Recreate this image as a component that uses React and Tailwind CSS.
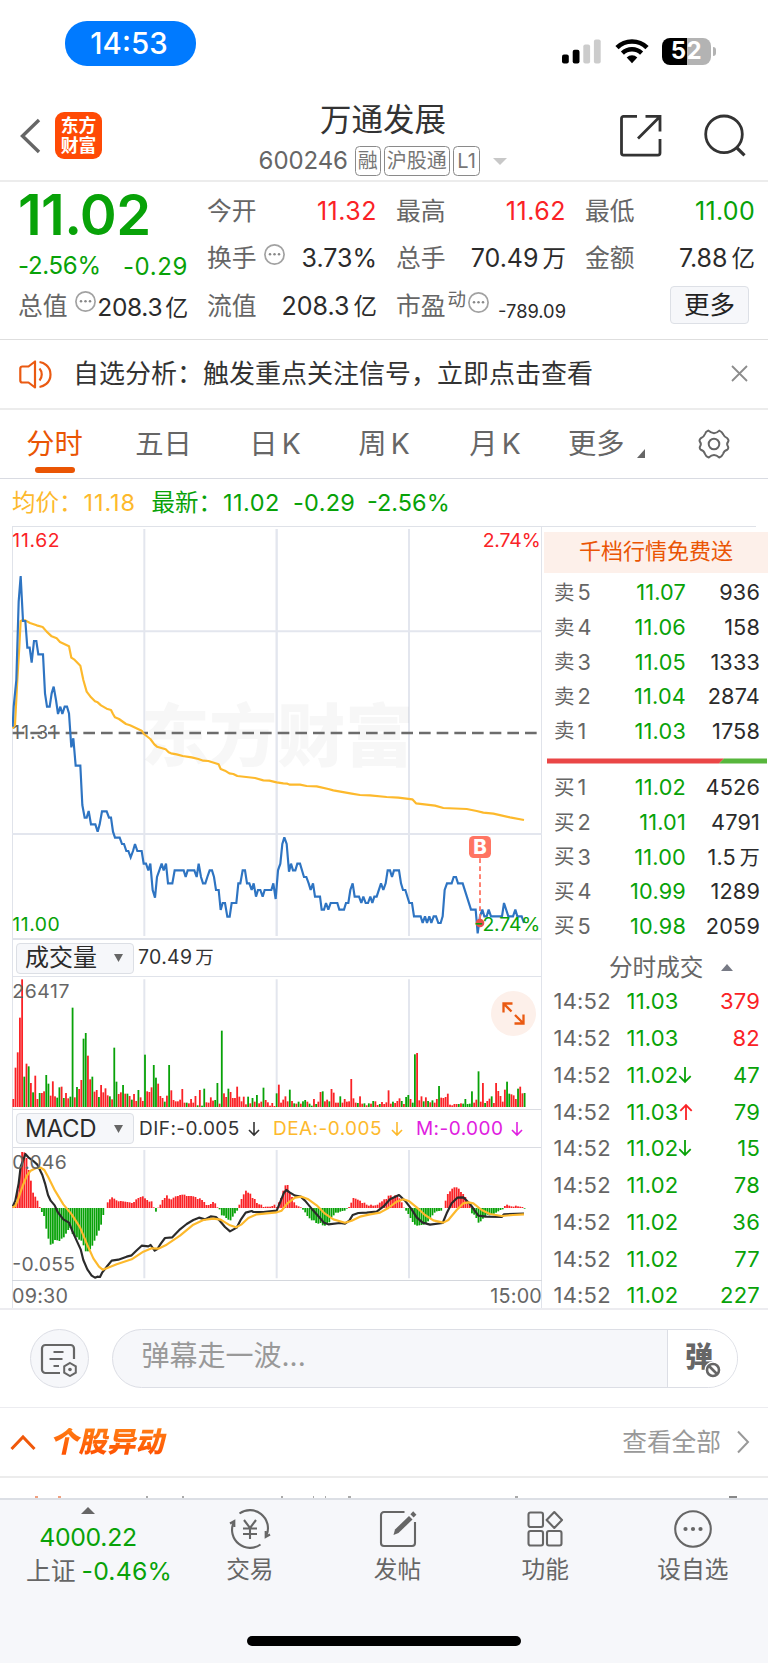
import React from "react";

const GREEN = "#08a208";
const RED = "#fa2226";

/* ---------- market data ---------- */

const PRICE_LINE =
  "38,620 41,560 49,480 56,245 62,168 69,303 76,303 82,383 89,383 95,428 102,363 109,363 115,403 129,403 135,520 141,560 149,560 155,520 161,500 168,540 174,582 181,560 187,582 194,560 201,560 207,580 214,682 220,655 227,737 241,737 247,855 254,893 260,893 266,873 273,913 286,913 293,935 299,913 306,874 320,874 327,893 333,893 339,935 345,953 359,953 366,972 372,972 379,993 385,993 392,1012 399,993 405,972 412,993 425,993 431,1031 438,1031 445,1051 451,1031 458,1110 465,1133 471,1071 478,1051 485,1031 491,1051 498,1031 504,1090 517,1090 524,1051 551,1051 557,1071 563,1051 583,1051 590,1071 596,1031 603,1071 609,1090 616,1090 622,1071 629,1051 636,1051 642,1071 648,1110 656,1110 662,1170 668,1149 675,1149 682,1190 689,1190 695,1149 709,1149 715,1090 721,1090 728,1051 735,1051 741,1090 748,1090 755,1110 761,1090 768,1130 774,1110 781,1110 788,1130 794,1110 814,1110 820,1090 827,1137 834,1051 841,1031 847,972 853,952 860,972 867,1055 873,1031 879,1051 886,1051 892,1031 900,1031 912,1071 919,1071 926,1090 932,1110 939,1090 945,1130 960,1130 965,1169 972,1169 978,1149 985,1169 992,1149 1012,1149 1018,1169 1032,1169 1038,1149 1045,1149 1051,1110 1058,1090 1064,1130 1077,1130 1084,1149 1090,1130 1097,1149 1104,1149 1111,1130 1117,1149 1123,1130 1130,1130 1143,1090 1150,1110 1157,1090 1163,1051 1170,1051 1176,1071 1182,1051 1197,1051 1203,1090 1209,1110 1216,1110 1228,1149 1236,1149 1242,1189 1262,1189 1268,1209 1275,1189 1281,1209 1288,1189 1294,1209 1301,1189 1308,1189 1315,1209 1322,1209 1328,1189 1334,1110 1341,1090 1355,1090 1361,1071 1368,1071 1374,1090 1388,1090 1413,1169 1427,1169 1433,1240 1440,1189 1447,1169 1453,1189 1460,1189 1466,1169 1473,1189 1506,1189 1512,1149 1525,1189 1539,1189 1546,1169 1552,1189 1565,1189 1572,1209";

const AVERAGE_LINE =
  "38,625 45,615 52,480 58,380 62,303 69,300 76,301 90,309 110,316 128,321 140,335 155,349 170,355 180,366 207,379 214,413 222,418 241,437 250,480 260,515 273,532 285,544 293,547 303,556 320,566 333,570 339,582 345,592 357,597 378,612 390,616 425,632 432,642 451,657 463,673 471,680 497,688 506,697 513,700 530,703 548,708 575,712 595,717 610,722 625,723 656,733 662,747 675,752 688,760 700,762 712,768 765,774 790,781 808,782 830,787 850,790 862,791 870,794 900,794 920,798 950,799 985,807 1000,811 1055,821 1080,825 1110,826 1160,831 1195,833 1237,838 1248,850 1305,857 1330,864 1400,867 1430,873 1450,878 1480,881 1530,892 1572,900";

const DIF_LINE =
  "38,830 46,812 56,760 62,710 70,690 76,672 85,682 100,693 112,704 118,716 127,735 135,760 144,795 152,812 164,826 173,846 190,868 207,878 217,903 230,932 242,958 250,990 262,1018 275,1037 285,1043 292,1040 300,1041 307,1027 322,1008 335,992 355,989 380,980 395,976 408,963 425,947 445,949 452,945 464,962 472,957 483,940 495,924 517,922 540,898 560,882 580,870 597,863 615,868 632,859 648,861 660,873 675,891 690,904 710,893 723,868 737,848 755,843 760,846 790,846 830,842 840,818 852,788 859,780 870,788 885,797 902,800 915,812 935,836 958,862 972,878 985,883 1020,879 1035,881 1048,872 1058,855 1075,849 1100,848 1130,845 1150,830 1170,808 1197,795 1215,812 1235,838 1250,862 1268,878 1290,884 1328,879 1340,850 1355,820 1372,803 1390,802 1410,822 1435,857 1460,860 1505,861 1512,853 1572,851";

const DEA_LINE =
  "38,832 46,828 55,806 68,768 80,738 92,722 108,714 122,713 133,720 145,742 165,782 190,823 215,853 240,892 262,945 280,985 297,1010 308,1019 322,1014 350,1003 395,988 430,965 455,955 475,956 500,944 540,917 580,884 610,870 640,866 662,869 690,886 708,892 725,883 745,864 770,853 830,847 845,842 862,820 885,803 905,800 925,808 950,826 975,851 1000,868 1035,878 1055,872 1080,860 1110,853 1140,848 1165,834 1190,815 1210,808 1228,814 1250,832 1275,855 1300,871 1330,878 1345,870 1370,840 1390,820 1405,817 1420,820 1445,840 1470,852 1505,858 1540,855 1572,853";

// One bar per minute; a negative number is a falling (green) minute.
const VOLUMES = [
  24, 118, 164, 268, 383, -91, 130, -122, 72, -44, 94, 24, -42, 42, 47, -96, -70, 34, 77, 32,
  -28, -59, 61, -27, 42, 26, -31, -298, 29, -60, 54, 81, -205, -222, 154, 83, -91, 46, 51, -30,
  66, 44, 56, 35, -32, 23, -178, -76, 39, 44, -66, 40, -40, 33, -22, 39, 18, -51, 29, 18,
  -157, 47, 45, 59, -126, -88, 70, 33, 27, -16, 34, -126, 50, 21, 17, 17, 22, 54, 13, -13,
  11, 24, 13, 33, -5, 51, -4, -55, 14, 13, 29, 19, -21, -72, 10, -229, 41, 30, -55, 45,
  27, 27, 61, 31, 17, 31, 8, -31, 11, -27, 16, -36, 11, 16, -58, 21, 14, 4, 12, 3,
  -41, 67, 13, 22, 32, 17, -52, 18, -11, 10, -16, 10, -17, -21, 16, -10, -4, 24, -9, 16,
  45, -47, 17, 22, -17, 54, 43, 13, 13, -32, 13, 24, 16, 17, 84, 26, 13, -12, 32, 10,
  -11, 5, -11, 10, -18, 17, 6, -9, 15, 9, 14, 50, 10, -16, 12, 18, 26, -18, 9, -30,
  -36, 24, -13, -158, 162, 20, 32, -17, 29, -18, 14, -20, 13, 24, -63, 28, 27, 30, 40, 7,
  5, 9, 9, -9, 11, -10, -24, -9, -10, -47, 13, 22, -107, 16, 72, -12, 18, 25, -32, 12,
  72, 48, 33, 16, 52, -76, -40, 38, 35, 24, -55, 61, 41, -42,
];

const MACD_BARS = [
  3, 15, 55, 110, 168, 167, 150, 114, 82, 46, 34, 22, 3, -12, -24, -62, -92, -110, -107, -96,
  -97, -99, -92, -88, -77, -66, -60, -78, -85, -88, -95, -98, -112, -130, -130, -124, -113, -98, -83, -68,
  -50, -21, 0, 17, 26, 32, 28, 23, 20, 21, 20, 19, 18, 17, 15, 18, 26, 30, 33, 35,
  29, 24, 19, 20, 2, -11, 1, 10, 24, 30, 38, 28, 26, 31, 35, 36, 39, 40, 40, 36,
  36, 36, 35, 33, 27, 29, 24, 18, 9, 9, 12, 18, 14, 2, -4, -22, -23, -30, -35, -37,
  -26, -16, -8, 10, 27, 41, 52, 46, 43, 30, 27, 15, 11, 10, 3, 4, 4, 4, 6, 10,
  3, 17, 30, 52, 68, 69, 45, 33, 17, 8, 5, 2, -5, -13, -24, -31, -37, -37, -45, -47,
  -45, -52, -53, -47, -43, -28, -22, -14, -14, -11, -9, -8, -2, 3, 16, 30, 28, 25, 22, 15,
  16, 10, 7, 10, 7, 8, 10, 16, 20, 26, 27, 37, 38, 33, 38, 36, 29, 17, 1, -8,
  -18, -30, -42, -50, -53, -52, -51, -50, -47, -40, -32, -22, -14, -10, -9, -8, 0, 22, 42, 50,
  58, 62, 62, 58, 48, 42, 33, 20, 10, -16, -20, -30, -44, -40, -32, -28, -20, -22, -20, -17,
  -14, -10, -6, -4, 6, 10, 7, 5, 4, 7, 5, 4, 3, -2,
];

const SELLS = [
  ["卖", "5", "11.07", "936"],
  ["卖", "4", "11.06", "158"],
  ["卖", "3", "11.05", "1333"],
  ["卖", "2", "11.04", "2874"],
  ["卖", "1", "11.03", "1758"],
];
const BUYS = [
  ["买", "1", "11.02", "4526"],
  ["买", "2", "11.01", "4791"],
  ["买", "3", "11.00", "1.5", "万"],
  ["买", "4", "10.99", "1289"],
  ["买", "5", "10.98", "2059"],
];
const TRADES = [
  ["11.03", "", "379", true],
  ["11.03", "", "82", true],
  ["11.02", "down", "47"],
  ["11.03", "up", "79"],
  ["11.02", "down", "15"],
  ["11.02", "", "78"],
  ["11.02", "", "36"],
  ["11.02", "", "77"],
  ["11.02", "", "227"],
];

/* ---------- small pieces ---------- */

function Triangle({ w, h, down, className }) {
  const pts = down ? `0,0 ${w},0 ${w / 2},${h}` : `0,${h} ${w},${h} ${w / 2},0`;
  return (
    <svg width={w} height={h} className={className} fill="currentColor">
      <polygon points={pts} />
    </svg>
  );
}

function Info({ className = "" }) {
  return (
    <svg width="21" height="21" viewBox="0 0 21 21" className={`shrink-0 self-start text-[#a2a2a2] ${className}`}>
      <circle cx="10.5" cy="10.5" r="9.6" fill="none" stroke="currentColor" strokeWidth="1.7" />
      <g fill="#888">
        <circle cx="6" cy="10.3" r="1.25" />
        <circle cx="10.5" cy="10.3" r="1.25" />
        <circle cx="15" cy="10.3" r="1.25" />
      </g>
    </svg>
  );
}

function Arrow({ up, className = "" }) {
  return (
    <svg width="14" height="18" viewBox="0 0 14 18" fill="none" stroke="currentColor" strokeWidth="1.8" className={`shrink-0 ${className}`}>
      {up ? <path d="M7 17V2M1.3 7.8 7 2l5.7 5.8" /> : <path d="M7 1v15M1.3 10.2 7 16l5.7-5.8" />}
    </svg>
  );
}

function Cell({ label, value, unit, color = "text-[#2b2b2b]", info }) {
  return (
    <div className="flex h-[47.5px] items-center whitespace-nowrap text-[24.8px]">
      <span className="text-[#666]">{label}</span>
      {info && <Info className="ml-[7px] mt-[9px]" />}
      <span className={`ml-auto text-[25px] ${color}`}>
        {value}
        {unit && <span className="ml-[4px] text-[23.5px]">{unit}</span>}
      </span>
    </div>
  );
}

function Dropdown({ children }) {
  return (
    <div className="ml-[3px] flex h-[31px] w-[118px] shrink-0 items-center justify-between rounded-[4px] border border-[#dcdfe5] bg-[#f6f7fa] pl-[8px] pr-[10px] text-[24px] text-[#2b2b2b]">
      <span>{children}</span>
      <Triangle w={9} h={8} down className="text-[#666]" />
    </div>
  );
}

/* ---------- sections ---------- */

function StatusBar() {
  return (
    <div className="flex h-[95px] items-start justify-between pl-[65px] pr-[52px]">
      <div className="mt-[21px] flex h-[45px] w-[131px] items-center justify-center rounded-[22px] bg-[#007aff] pr-[3px] text-[29.5px] font-medium text-white">
        14:53
      </div>
      <div className="mt-[37px] flex h-7 items-center">
        <svg width="39" height="25" viewBox="0 0 39 25">
          <rect x="0" y="15.5" width="6.8" height="9" rx="2" fill="#000" />
          <rect x="10.7" y="10.8" width="6.8" height="13.7" rx="2" fill="#000" />
          <rect x="21.3" y="5.5" width="6.8" height="19" rx="2" fill="#ccc" />
          <rect x="31.9" y="0.5" width="6.8" height="24" rx="2" fill="#ccc" />
        </svg>
        <svg width="34" height="25" viewBox="0 0 34 25" fill="none" className="ml-[14px]">
          <path d="M2 8.6a21.4 21.4 0 0 1 30 0" stroke="#000" strokeWidth="4.6" />
          <path d="M7.4 14.2a13.8 13.8 0 0 1 19.2 0" stroke="#000" strokeWidth="4.4" />
          <path d="M11.7 18.4a7.6 7.6 0 0 1 10.6 0L17 24.2z" fill="#000" />
        </svg>
        <div className="ml-[13px] flex h-[27px] w-[49px] items-center justify-center rounded-[8px] bg-[linear-gradient(90deg,#000_52%,#b3b3b3_52%)] text-[24px] font-bold tracking-[0.4px] text-white">
          52
        </div>
        <div className="ml-[2px] h-[9px] w-[3px] rounded-r-full bg-[#b3b3b3]" />
      </div>
    </div>
  );
}

function Tag({ children, className = "px-[2px]" }) {
  return (
    <span className={`flex h-[30px] items-center justify-center rounded-[4.5px] border-[1.5px] border-[#8a8a8a] text-[20px] text-[#777] ${className}`}>
      {children}
    </span>
  );
}

function Header() {
  return (
    <header className="flex h-[87px] items-start border-b-2 border-[#ececec]">
      <svg width="22" height="36" viewBox="0 0 22 36" fill="none" className="ml-[19px] mt-[23px]">
        <path d="M20 2 3.500 18 20 34" stroke="#666" strokeWidth="3.4" />
      </svg>
      <div className="ml-[14px] mt-[17px] flex h-[47px] w-[47px] flex-col items-center justify-center gap-[2px] rounded-[9px] bg-[#ff4a05] text-[17.800px] font-bold text-white">
        <span>东方</span>
        <span>财富</span>
      </div>
      <div className="ml-[151px] mt-[8px] flex w-[260px] flex-col items-center">
        <h1 className="text-[31.5px] leading-[34px] text-[#333]">万通发展</h1>
        <div className="mt-[9px] flex items-center gap-[3px] text-[24px] text-[#666]">
          <span className="mr-[4px] tracking-[-0.1px]">600246</span>
          <Tag>融</Tag>
          <Tag>沪股通</Tag>
          <Tag className="px-[3.500px]">L1</Tag>
          <Triangle w={14} h={7} down className="ml-[10px] text-[#c8c8c8]" />
        </div>
      </div>
      <svg width="44" height="44" viewBox="0 0 44 44" fill="none" stroke="#333" strokeWidth="2.8" className="ml-[106px] mt-[19px]">
        <path d="M18 2.400H4.500a2 2 0 0 0-2 2v34.700a2 2 0 0 0 2 2h34.500a2 2 0 0 0 2-2V25" />
        <path d="M26.500 2.400H41V17.500M40.500 3 19 24.500" />
      </svg>
      <svg width="44" height="44" viewBox="0 0 44 44" fill="none" stroke="#333" strokeWidth="2.800" className="ml-[40px] mt-[19px]">
        <circle cx="21" cy="20.300" r="18.300" />
        <path d="m33.500 33.500 8 7.800" strokeWidth="3.200" />
      </svg>
    </header>
  );
}

function Quote() {
  return (
    <section className="flex h-[158px] gap-[19px] border-b border-[#dedede] pl-[18px]">
      <div className="w-[170px]">
        <div className="flex h-[66px] items-center text-[56px] font-semibold tracking-[-0.600px] text-[#08a208]">11.02</div>
        <div className="flex h-[35px] items-center justify-between text-[24px] tracking-[-0.300px] text-[#08a208]">
          <span>-2.56%</span>
          <span className="mt-[2px] tracking-[0.600px]">-0.29</span>
        </div>
        <div className="flex h-[47px] items-center whitespace-nowrap text-[24.8px]">
          <span className="text-[#666]">总值</span>
          <Info className="ml-[7px] mt-[8px]" />
          <span className="ml-auto mt-[2px] text-[24.500px] tracking-[-0.300px] text-[#2b2b2b]">
            208.3<span className="ml-[3px] text-[23px]">亿</span>
          </span>
        </div>
      </div>
      <div className="w-[170px] pt-[5.5px]">
        <Cell label="今开" value="11.32" color="text-[#fa2226] tracking-[0.500px]" />
        <Cell label="换手" value="3.73%" info />
        <Cell label="流值" value="208.3" unit="亿" />
      </div>
      <div className="w-[170px] pt-[5.5px]">
        <Cell label="最高" value="11.62" color="text-[#fa2226] tracking-[0.500px]" />
        <Cell label="总手" value="70.49" unit="万" />
        <div className="flex h-[47.5px] items-center whitespace-nowrap text-[24.8px]">
          <span className="text-[#666]">市盈</span>
          <span className="ml-[2px] mt-[7px] self-start text-[18.500px] text-[#666]">动</span>
          <Info className="ml-[2px] mt-[9px]" />
          <span className="ml-auto mt-[9px] text-[18.300px] text-[#2b2b2b]">-789.09</span>
        </div>
      </div>
      <div className="w-[170px] pt-[5.5px]">
        <Cell label="最低" value="11.00" color="text-[#08a208] tracking-[0.300px]" />
        <Cell label="金额" value="7.88" unit="亿" />
        <button className="ml-[85px] mt-[3px] h-[38px] w-[79px] rounded-[4px] border-[1.5px] border-[#dde0e6] bg-[#f6f7fa] text-[25.500px] text-[#222]">更多</button>
      </div>
    </section>
  );
}

function Notice() {
  return (
    <section className="flex h-[70px] items-center border-b-2 border-[#ececec] pl-[19px] pr-[20px]">
      <svg width="34" height="29" viewBox="0 0 34 29" fill="none" stroke="#ea5a12" strokeWidth="2.200" strokeLinejoin="round">
        <path d="M16 1.500v26l-6.500-5H3.300a2 2 0 0 1-2-2v-12a2 2 0 0 1 2-2h6.200z" />
        <path d="M20.500 8.500c3 3.300 3 8.700 0 12M20.500 2c3.500.5 11 3.500 11 12.500s-7.500 12-11 12.500" />
      </svg>
      <p className="ml-[20px] text-[26px] text-[#333]">自选分析：触发重点关注信号，立即点击查看</p>
      <svg width="17" height="17" viewBox="0 0 17 17" stroke="#8c8c8c" strokeWidth="1.800" className="ml-auto mb-px">
        <path d="m1 1 15 15M16 1 1 16" />
      </svg>
    </section>
  );
}

function Tabs() {
  return (
    <nav className="flex h-[69px] items-center border-b-[1.5px] border-[#d9dbe2] text-center text-[28.300px] text-[#666]">
      <div className="relative w-[109px] text-[#ea5504]">
        分时
        <span className="absolute left-[35px] top-[37px] h-[6px] w-[40px] rounded-[3px] bg-[#ea5504]" />
      </div>
      <div className="w-[109px]">五日</div>
      <div className="w-[114px]">日<span className="ml-1">K</span></div>
      <div className="w-[104px]">周<span className="ml-1">K</span></div>
      <div className="w-[118px]">月<span className="ml-1">K</span></div>
      <div className="flex w-[106px] items-end pl-[14px]">
        更多
        <svg width="8" height="9" className="ml-3" fill="currentColor"><polygon points="8,0 8,9 0,9" /></svg>
      </div>
      <svg width="32" height="32" viewBox="0 0 32 32" fill="none" stroke="#666" strokeWidth="2" strokeLinejoin="round" className="ml-[37.500px]">
        <path d="M10.200 2.600Q13.300 5.200 16 5.200T21.300 2.600Q24 3.600 25.300 6.500Q26.300 9 29.200 10.200Q31.200 12 30 14Q28.300 16 30 18.500Q30.800 20.500 29.200 21.800Q26 22.800 25 26Q24 28.600 21.300 29.500Q18.500 27 16 27T10.700 29.500Q7.800 28.500 7 26Q6 22.800 2.800 21.800Q1.200 20.500 2 18.500Q3.700 16 2 14Q.8 12 2.800 10.200Q6 9 7 6Q7.700 3.600 10.200 2.600Z" />
        <circle cx="16" cy="16" r="5.300" />
      </svg>
    </nav>
  );
}

function Averages() {
  return (
    <div className="flex h-[47px] items-center pl-[12px] pt-[1px] text-[23.500px]">
      <span className="text-[#fdb92c]">均价：</span>
      <span className="ml-[1px] w-[68px] tracking-[0.900px] text-[#fdb92c]">11.18</span>
      <span className="text-[#08a208]">最新：</span>
      <span className="ml-[1px] w-[70px] tracking-[0.500px] text-[#08a208]">11.02</span>
      <span className="w-[74px] tracking-[0.300px] text-[#08a208]">-0.29</span>
      <span className="text-[#08a208]">-2.56%</span>
    </div>
  );
}

function PriceChart() {
  return (
    <svg width="530" height="411" viewBox="36 21 1590 1233" className="block">
      <g stroke="#e3e6ee" strokeWidth="6">
        <path d="M36 334H1626" />
        <path d="M36 942H1626" />
        <path d="M433 27V1248M1227 27V1248" />
        <path d="M830 27V1248" strokeWidth="7" />
      </g>
      <text x="424" y="724" fontFamily="Noto Sans CJK SC" fontWeight="900" fontSize="204" fill="#777" fillOpacity="0.06">
        东方财富
      </text>
      <path d="M38 639H1620" stroke="#6c6c6c" strokeWidth="7" strokeDasharray="35 18" />
      <g fontFamily="Inter" fontSize="58">
        <text x="37" y="80" textLength="142" fill={RED}>11.62</text>
        <text x="1448" y="80" textLength="174" fill={RED}>2.74%</text>
        <text x="37" y="657" textLength="134" fill="#666">11.31</text>
        <text x="37" y="1232" textLength="142" fill={GREEN}>11.00</text>
      </g>
      <polyline points={AVERAGE_LINE} fill="none" stroke="#fdb92c" strokeWidth="6.500" strokeLinejoin="round" />
      <polyline points={PRICE_LINE} fill="none" stroke="#2e74c2" strokeWidth="6.500" strokeLinejoin="miter" strokeMiterlimit="3" />
      <path d="M1440 1015V1200" stroke="#ff7766" strokeWidth="5.500" strokeDasharray="14 10" />
      <rect x="1407" y="948" width="66" height="66" rx="14" fill="#ff7563" />
      <text x="1440" y="1003" textAnchor="middle" fontFamily="Inter" fontWeight="800" fontSize="61" fill="#fff">B</text>
      <circle cx="1440" cy="1209" r="13" fill="#e8504a" />
      <text x="1423" y="1232" textLength="198" fontFamily="Inter" fontSize="58" fill={GREEN}>-2.74%</text>
    </svg>
  );
}

function VolumeChart() {
  return (
    <svg width="530" height="132" viewBox="36 141 1590 396" className="block">
      <path d="M433 148V531M830 148V531M1227 148V531" stroke="#e3e6ee" strokeWidth="6" />
      {VOLUMES.map((v, i) => (
        <rect key={i} x={37.3 + i * 6.583} y={531 - Math.abs(v)} width="5.4" height={Math.abs(v)} fill={v < 0 ? GREEN : RED} />
      ))}
      <text x="37" y="205" textLength="171" fontFamily="Inter" fontSize="58" fill="#666">26417</text>
    </svg>
  );
}

function MacdChart() {
  return (
    <svg width="530" height="132" viewBox="36 654 1590 396" className="block">
      <path d="M433 660V1045M830 660V1045M1227 660V1045" stroke="#e3e6ee" strokeWidth="6" />
      {MACD_BARS.map((v, i) => (
        <rect key={i} x={37.3 + i * 6.583} y={v < 0 ? 834 : 834 - v} width="5.4" height={Math.abs(v)} fill={v < 0 ? GREEN : RED} />
      ))}
      <polyline points={DIF_LINE} fill="none" stroke="#2b2b2b" strokeWidth="6.500" strokeLinejoin="round" />
      <polyline points={DEA_LINE} fill="none" stroke="#fdb92c" strokeWidth="6.500" strokeLinejoin="round" />
      <g fontFamily="Inter" fontSize="58" fill="#666">
        <text x="37" y="717" textLength="163">0.046</text>
        <text x="37" y="1024" textLength="188">-0.055</text>
      </g>
    </svg>
  );
}

function Charts() {
  return (
    <div className="ml-3 w-[530px] border-l border-r border-[#e0e3ea]">
      <div className="-mx-px">
        <PriceChart />
      </div>
      <div className="flex h-[39px] items-center border-b border-t-2 border-[#e0e3ea]">
        <Dropdown>成交量</Dropdown>
        <span className="ml-1 text-[19.500px] tracking-[0.300px] text-[#333]">
          70.49<span className="ml-[3px] text-[18.500px]">万</span>
        </span>
      </div>
      <div className="relative -mx-px">
        <VolumeChart />
        <div className="absolute right-[6.500px] top-[14px] flex size-[45px] items-center justify-center rounded-full bg-[#fdf0ea]">
          <svg width="23" height="23" viewBox="0 0 23 23" fill="none" stroke="#ea5a12" strokeWidth="2.300">
            <path d="M1.500 10.500V1.500H10.500M1.500 1.500 9.500 9.500M21.500 12.500v9H12.500M21.500 21.500 13 13" />
          </svg>
        </div>
      </div>
      <div className="flex h-[39px] items-center border-b-[1.500px] border-t border-[#dadce2] text-[19px] tracking-[0.450px]">
        <Dropdown><span className="tracking-[-0.2px]">MACD</span></Dropdown>
        <span className="ml-[5px] w-[101px] text-[#333]">DIF:-0.005</span>
        <Arrow className="ml-[7px] mt-[1px] scale-[0.88] text-[#333]" />
        <span className="ml-[12px] w-[110px] text-[#fdb92c]">DEA:-0.005</span>
        <Arrow className="ml-[7px] mt-[1px] scale-[0.88] text-[#fdb92c]" />
        <span className="ml-[12px] w-[88px] text-[#e020e0]">M:-0.000</span>
        <Arrow className="ml-[6px] mt-[1px] scale-[0.88] text-[#e020e0]" />
      </div>
      <div className="-mx-px">
        <MacdChart />
      </div>
      <div className="-mx-px flex h-[29px] items-center justify-between border-t-[1.500px] border-[#d4d7dd] pt-[3px] text-[19.800px] tracking-[0.200px] text-[#666]">
        <span>09:30</span>
        <span>15:00</span>
      </div>
    </div>
  );
}

function BookRow({ row }) {
  const [side, level, price, qty, unit] = row;
  return (
    <div className="flex h-[34.6px] items-center pl-[11px] pr-[8px] text-[21.700px]">
      <span className="flex w-[53px] items-center text-[#666]">
        <span className="text-[20.500px]">{side}</span>
        <span className="ml-[3px]">{level}</span>
      </span>
      <span className="w-[79px] text-right tracking-[0.200px] text-[#08a208]">{price}</span>
      <span className="flex-1 text-right tracking-[0.150px] text-[#2b2b2b]">
        {qty}
        {unit && <span className="ml-1 text-[20px]">{unit}</span>}
      </span>
    </div>
  );
}

function OrderBook() {
  return (
    <div className="w-[226px] pl-[1px] pt-[5px]">
      <div className="ml-[1px] flex h-[41px] items-center justify-center pb-1 text-[22px] text-[#ea5504] bg-[#fdf0ea]">千档行情免费送</div>
      <div className="pt-[3px]">
        {SELLS.map((r) => <BookRow key={r[1]} row={r} />)}
      </div>
      <svg width="220" height="6" className="ml-1 mt-[9px] block">
        <polygon points="0,0.500 177,0.500 172,5.500 0,5.500" fill="#ea4646" />
        <polygon points="177,0.500 220,0.500 220,5.500 172,5.500" fill="#57b63c" />
      </svg>
      <div className="pt-[7px]">
        {BUYS.map((r) => <BookRow key={r[1]} row={r} />)}
      </div>
      <div className="flex h-[39px] items-center pl-[66px] pt-[8px] text-[23.600px] text-[#666]">
        分时成交
        <Triangle w={12} h={7} className="ml-[18px] text-[#777a85]" />
      </div>
      {TRADES.map(([price, dir, qty, rise], i) => (
        <div key={i} className="flex h-[36.75px] items-center pl-[10.500px] pr-[8px] text-[22px] tracking-[0.200px]">
          <span className="w-[73px] text-[#666]">14:52</span>
          <span className="text-[#08a208]">{price}</span>
          {dir && <Arrow up={dir === "up"} className={dir === "up" ? "text-[#fa2226]" : "text-[#08a208]"} />}
          <span className={`ml-auto ${rise ? "text-[#fa2226]" : "text-[#08a208]"}`}>{qty}</span>
        </div>
      ))}
    </div>
  );
}

function CommentBar() {
  return (
    <section className="flex h-[100px] items-center border-b border-t-2 border-[#ececf0] pl-[30px]">
      <div className="flex size-[59px] items-center justify-center rounded-full border-[1.500px] border-[#dcdee5] bg-[#f6f7fa]">
        <svg width="38" height="34" viewBox="0 0 38 34" fill="none" stroke="#666" strokeWidth="2.200" className="mr-[1px] mt-[2px]">
          <path d="M20 30H5.500a3.500 3.500 0 0 1-3.500-3.500V5.500A3.500 3.500 0 0 1 5.500 2h25A3.500 3.500 0 0 1 34 5.500V16" />
          <path d="M13.500 9h10M9.500 16h13M13.500 23h5.500" />
          <path d="m30 20 5.800 3.400v6.200L30 33l-5.800-3.400v-6.200z" strokeWidth="2" />
          <circle cx="30" cy="26.500" r="1.800" fill="#666" stroke="none" />
        </svg>
      </div>
      <div className="ml-[23px] flex h-[59px] w-[626px] overflow-hidden rounded-full border-[1.500px] border-[#dcdee5] bg-[#f6f7fa]">
        <div className="flex flex-1 items-center pb-[6px] pl-[28.500px] text-[28px] text-[#999]">弹幕走一波...</div>
        <div className="relative w-[70px] border-l-[1.500px] border-[#dcdee5] bg-white pl-[17px] pt-[13px] text-[28px] font-black text-[#666]">
          弹
          <svg width="18" height="18" viewBox="0 0 18 18" className="absolute left-[36px] top-[31px]">
            <circle cx="9" cy="9" r="8.500" fill="#fff" />
            <path d="M9 3a6 6 0 1 0 0 12 6 6 0 0 0 0-12M5 5l8 8" fill="none" stroke="#666" strokeWidth="2.600" />
          </svg>
        </div>
      </div>
    </section>
  );
}

function Movements() {
  return (
    <section className="flex h-[70px] items-center border-b-2 border-[#ececec] pl-[10px] pr-[18px] text-[24.700px] text-[#999]">
      <svg width="26" height="17" viewBox="0 0 26 17" fill="none" stroke="#f0580a" strokeWidth="3">
        <path d="M1.500 15 13 3l11.500 12" />
      </svg>
      <h2 className="ml-[16px] -skew-x-12 bg-gradient-to-b from-[#ff7d14] to-[#ff4d00] bg-clip-text text-[28.500px] font-black text-transparent">个股异动</h2>
      <span className="ml-auto">查看全部</span>
      <svg width="14" height="24" viewBox="0 0 14 24" fill="none" stroke="#999" strokeWidth="2" className="ml-[15px]">
        <path d="m2 1.500 10 10.500L2 22.500" />
      </svg>
    </section>
  );
}

function NavItem({ label, children }) {
  return (
    <div className="flex w-[147.700px] flex-col items-center pt-[9px] text-[23.700px] text-[#666]">
      <svg width="42" height="40" viewBox="0 0 42 40" fill="none" stroke="#666" strokeWidth="2.100">{children}</svg>
      <span className="mt-[9px]">{label}</span>
    </div>
  );
}

function BottomNav() {
  return (
    <footer className="flex h-[165px] flex-col border-t-2 border-[#dcdfe5] bg-[#f6f7fa]">
      <div className="flex h-[136px]">
        <div className="flex w-[176px] flex-col items-center pt-[7px] text-[24.800px]">
          <Triangle w={14} h={7} className="text-[#666]" />
          <span className="mt-[11px] tracking-[-0.300px] text-[#08a208]">4000.22</span>
          <span className="ml-[22px] mt-[9px] whitespace-nowrap text-[#666]">
            上证<span className="ml-[6px] tracking-[0.200px] text-[#08a208]">-0.46%</span>
          </span>
        </div>
        <NavItem label="交易">
          <path d="M10.500 4.500A18 18 0 0 1 37.600 26M31.500 35.500A18 18 0 0 1 4.400 14" />
          <path d="m1 14.500 4.300-2.500v6M41 25.500 36.700 28v-6" />
          <path d="M15 11l6 8 6-8M21 19v11M14 19.500h14M14 25h14" />
        </NavItem>
        <NavItem label="发帖">
          <path d="M27.500 3H7a3 3 0 0 0-3 3v28a3 3 0 0 0 3 3h28a3 3 0 0 0 3-3V13" />
          <path d="m16.500 26 1.500-5.500 14-13.500 3.500 3.500-14 13.500z" fill="#666" stroke="none" />
          <path d="m35 6.800 2.800-2.800" strokeWidth="4.600" />
        </NavItem>
        <NavItem label="功能">
          <rect x="4.500" y="3.500" width="14.500" height="14.500" rx="2" />
          <rect x="4.500" y="22" width="14.500" height="14.500" rx="2" />
          <rect x="23" y="22" width="14.500" height="14.500" rx="2" />
          <path d="m30.300 3 7.700 8-7.700 8-7.700-8z" strokeLinejoin="round" />
        </NavItem>
        <NavItem label="设自选">
          <circle cx="21" cy="20" r="17.800" />
          <g fill="#666" stroke="none">
            <circle cx="13.500" cy="20" r="2.100" />
            <circle cx="21" cy="20" r="2.100" />
            <circle cx="28.500" cy="20" r="2.100" />
          </g>
        </NavItem>
      </div>
      <div className="mx-auto h-[10px] w-[274px] rounded-full bg-black" />
    </footer>
  );
}

export default function App() {
  return (
    <div className="h-[1663px] w-[768px] overflow-hidden bg-white font-['Inter','Noto_Sans_CJK_SC',sans-serif] leading-none">
      <StatusBar />
      <Header />
      <Quote />
      <Notice />
      <Tabs />
      <Averages />
      <div className="mx-3 h-px bg-[#dfe2e8]" />
      <div className="flex h-[781px] overflow-hidden">
        <Charts />
        <OrderBook />
      </div>
      <CommentBar />
      <Movements />
      <div className="flex h-[20px] items-end">
        <svg width="768" height="2">
          <path d="M35 1h3M58 1h3" stroke="#f0a080" strokeWidth="2" />
          <path d="M146 1h2M182 1h2M281 1h2M313 1h1M325 1h1M348 1h3M515 1h3" stroke="#aaa" strokeWidth="2" />
          <path d="M729 1h8" stroke="#888" strokeWidth="2" />
        </svg>
      </div>
      <BottomNav />
    </div>
  );
}
